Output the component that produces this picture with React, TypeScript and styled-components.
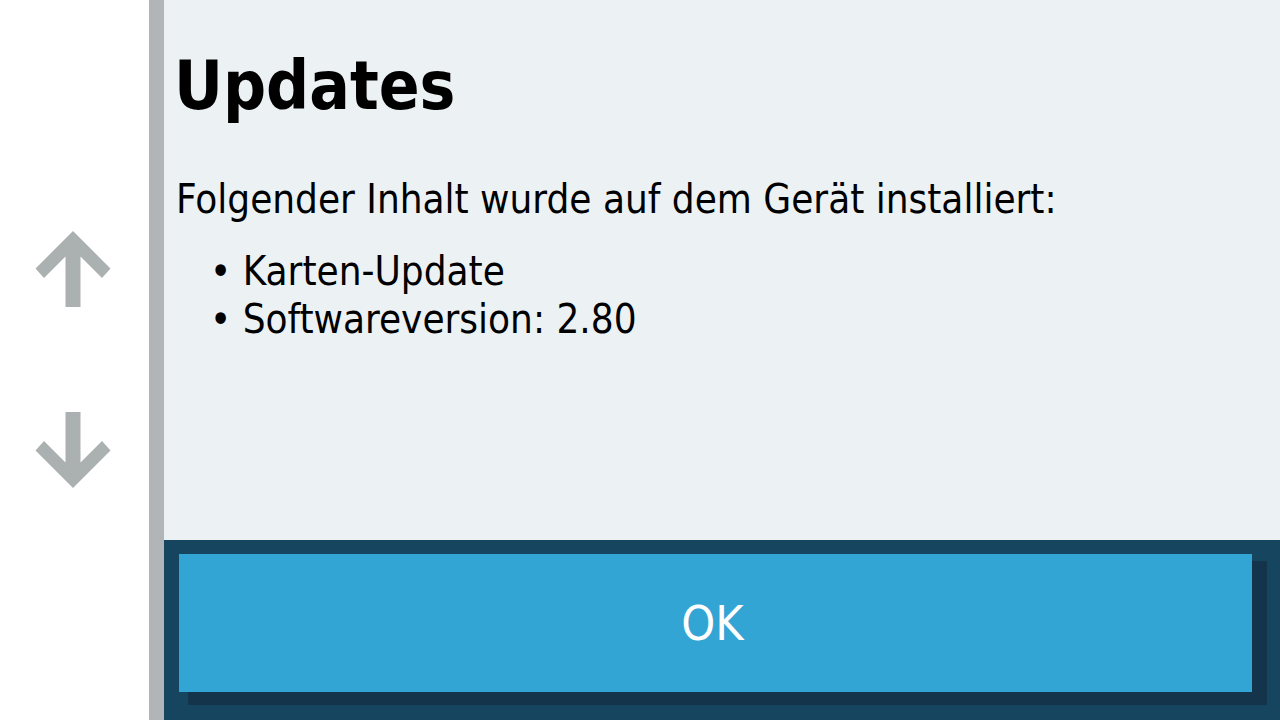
import styled, { createGlobalStyle } from "styled-components";

const GlobalStyle = createGlobalStyle`
  html, body {
    margin: 0;
    padding: 0;
    background: #ffffff;
  }

  body {
    font-family: "DejaVu Sans Condensed", "DejaVu Sans", sans-serif;
  }
`;

const installed = ["Karten-Update", "Softwareversion: 2.80"];

function ArrowIcon({ down }: { down?: boolean }) {
  return (
    <ArrowSvg viewBox="0 0 76 76" $down={down}>
      <path d="M38 0 L75.5 37.5 L67 47 L45.5 25.5 L45.5 76 L30.5 76 L30.5 25.5 L9 47 L0.5 37.5 Z" />
    </ArrowSvg>
  );
}

export default function App() {
  return (
    <>
      <GlobalStyle />
      <Screen>
        <Sidebar>
          <ArrowButton aria-label="Nach oben">
            <ArrowIcon />
          </ArrowButton>
          <ArrowButton aria-label="Nach unten">
            <ArrowIcon down />
          </ArrowButton>
        </Sidebar>
        <ScrollTrack />
        <Main>
          <Content>
            <Title>Updates</Title>
            <Message>Folgender Inhalt wurde auf dem Gerät installiert:</Message>
            <ItemList>
              {installed.map((item) => (
                <Item key={item}>• {item}</Item>
              ))}
            </ItemList>
          </Content>
          <Footer>
            <OkButton>OK</OkButton>
          </Footer>
        </Main>
      </Screen>
    </>
  );
}

const Screen = styled.div`
  display: flex;
  width: 1280px;
  height: 720px;
  overflow: hidden;
`;

const Sidebar = styled.div`
  width: 149px;
  flex-shrink: 0;
  background: #ffffff;
  display: flex;
  flex-direction: column;
  align-items: center;
  padding: 231px 4px 0 0;
  box-sizing: border-box;
  gap: 105px;
`;

const ArrowButton = styled.button`
  all: unset;
  cursor: pointer;
  display: block;
  width: 76px;
  height: 76px;
`;

const ArrowSvg = styled.svg<{ $down?: boolean }>`
  display: block;
  width: 76px;
  height: 76px;
  fill: #abb1b0;
  transform: ${({ $down }) => ($down ? "scaleY(-1)" : "none")};
`;

const ScrollTrack = styled.div`
  width: 15px;
  flex-shrink: 0;
  background: #b2b5b7;
`;

const Main = styled.div`
  flex: 1;
  display: flex;
  flex-direction: column;
`;

const Content = styled.div`
  flex: 1;
  background: #ecf1f4;
  padding: 46px 0 0 10px;
  color: #000000;
`;

const Title = styled.h1`
  margin: 0;
  font-size: 67px;
  font-weight: 700;
  line-height: 80px;
`;

const Message = styled.p`
  margin: 49px 0 0 2px;
  font-size: 40px;
  line-height: 48px;
`;

const ItemList = styled.ul`
  list-style: none;
  margin: 24px 0 0;
  padding: 0 0 0 36px;
`;

const Item = styled.li`
  font-size: 40px;
  line-height: 48px;
`;

const Footer = styled.div`
  height: 180px;
  flex-shrink: 0;
  background: #16455f;
  padding: 14px 28px 28px 15px;
  box-sizing: border-box;
  display: flex;
`;

const OkButton = styled.button`
  all: unset;
  flex: 1;
  cursor: pointer;
  background: #33a5d4;
  box-shadow: 12px 10px 0 3px #13344a;
  color: #ffffff;
  font-family: "DejaVu Sans Condensed", "DejaVu Sans", sans-serif;
  font-size: 48px;
  text-align: center;
  display: flex;
  align-items: center;
  justify-content: center;
  padding-right: 6px;
`;
